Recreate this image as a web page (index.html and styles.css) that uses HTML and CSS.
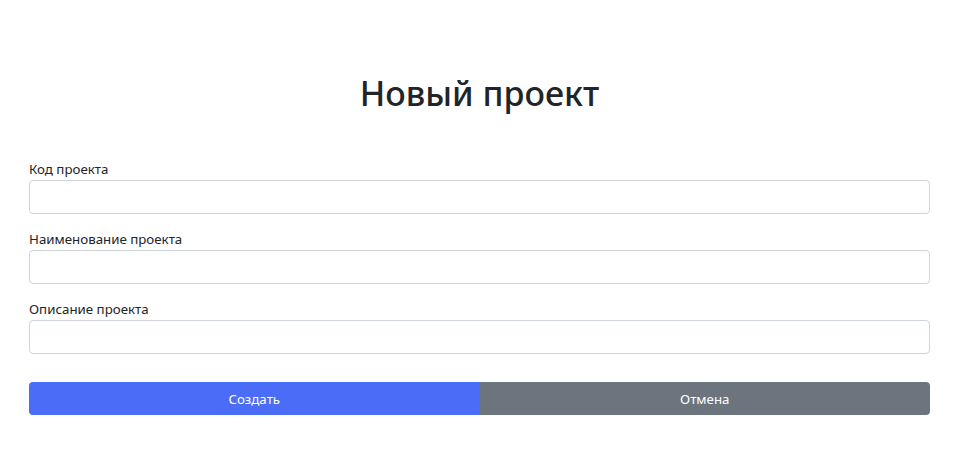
FILE: index.html
```html
<!DOCTYPE html>
<html lang="ru">
<head>
    <meta charset="UTF-8">
    <meta name="viewport" content="width=device-width, initial-scale=1.0">
    <title>Новый проект</title>
    <link rel="stylesheet" href="styles.css">
</head>
<body>
    <div class="container">
        <h1 class="title">Новый проект</h1>
        <form class="project-form">
            <div class="field">
                <label for="code">Код проекта</label>
                <input type="text" id="code">
            </div>
            <div class="field">
                <label for="name">Наименование проекта</label>
                <input type="text" id="name">
            </div>
            <div class="field">
                <label for="descr">Описание проекта</label>
                <input type="text" id="descr">
            </div>
            <div class="actions">
                <button type="submit" class="btn btn-primary">Создать</button>
                <button type="button" class="btn btn-secondary">Отмена</button>
            </div>
        </form>
    </div>
</body>
</html>
```

FILE: styles.css
```css
body {
    margin: 0;
    font-family: "Noto Sans", "Open Sans", sans-serif;
    color: #212529;
    background: #fff;
}
.container {
    padding: 72px 30px 0 29px;
}
.title {
    margin: 0 0 44px 0;
    text-align: center;
    font-size: 34px;
    font-weight: 500;
    line-height: 43px;
}
.field {
    margin-bottom: 15px;
}
.field label {
    display: block;
    font-size: 13.3px;
    line-height: 21px;
}
.field input {
    display: block;
    width: 100%;
    height: 34px;
    box-sizing: border-box;
    border: 1px solid #ced4da;
    border-radius: 4px;
    padding: 6px 12px;
    font-size: 14px;
}
.actions {
    display: flex;
    margin-top: 28px;
}
.btn {
    flex: 1;
    height: 33px;
    border: none;
    color: #fff;
    font-family: inherit;
    font-size: 13.3px;
    cursor: pointer;
}
.btn-primary {
    background-color: #4a6cf7;
    border-radius: 4px 0 0 4px;
}
.btn-secondary {
    background-color: #6c757d;
    border-radius: 0 4px 4px 0;
}
```
